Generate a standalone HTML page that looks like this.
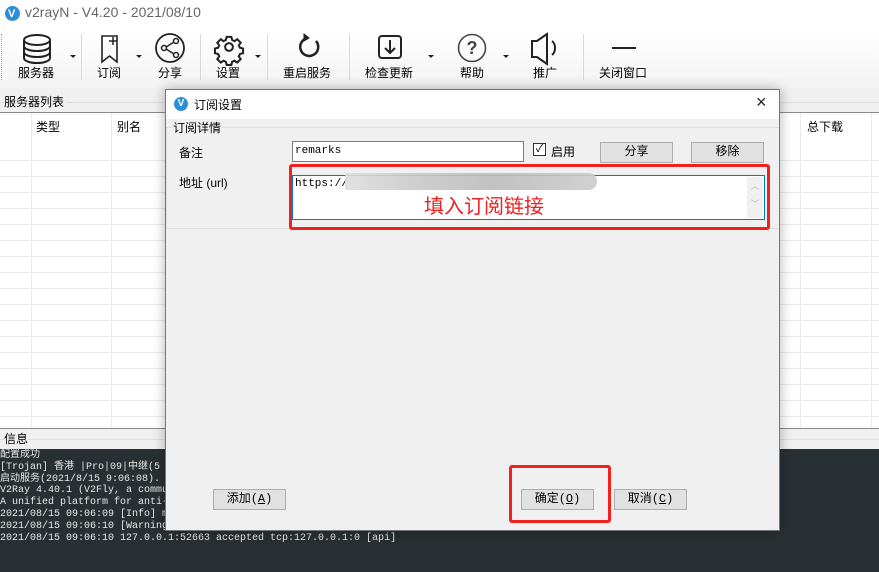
<!DOCTYPE html>
<html><head><meta charset="utf-8"><style>
*{margin:0;padding:0;box-sizing:border-box}
body{width:879px;height:572px;overflow:hidden;background:#fff;position:relative;font-family:"Liberation Sans","Microsoft YaHei","Noto Sans CJK SC",sans-serif;font-size:12px;color:#000}
.abs{position:absolute}
.tb{left:0;top:30px;width:879px;height:58px;background:linear-gradient(#fff,#f3f3f3)}
.tl{position:absolute;font-size:12px;top:64px;white-space:nowrap}
.sep{position:absolute;top:34px;width:1px;height:46px;background:#d8d8d8}
.arr{position:absolute;top:55px;width:0;height:0;border-left:3px solid transparent;border-right:3px solid transparent;border-top:3px solid #222}
.btn{position:absolute;background:#e1e1e1;border:1px solid #adadad;text-align:center;font-family:"Liberation Mono","Noto Sans CJK SC",monospace;font-size:12px;line-height:19px}
.cons{font-family:"Liberation Mono","Noto Sans CJK SC",monospace;font-size:10px;color:#e8e8e8;line-height:11.8px;white-space:pre}
</style></head><body>
<div class="abs" style="left:5px;top:6px;width:15px;height:15px;border-radius:50%;background:#2c8fd6"></div>
<div class="abs" style="left:8px;top:8px;color:#fff;font-size:11px;font-weight:bold">V</div>
<div class="abs" style="left:25px;top:4px;font-size:14px;color:#666">v2rayN - V4.20 - 2021/08/10</div>
<div class="abs tb"></div>
<div class="abs" style="left:1px;top:34px;width:1px;height:46px;border-left:1px dotted #aaa"></div>
<svg class="abs" style="left:0;top:30px" width="879" height="36" fill="none" stroke="#222" stroke-width="2">
<ellipse cx="37" cy="10" rx="13" ry="5"/><path d="M24 10v18c0 3 6 5 13 5s13-2 13-5V10M24 16c0 3 6 5 13 5s13-2 13-5M24 22c0 3 6 5 13 5s13-2 13-5"/>
<path d="M102 6h15v26l-7.5-6-7.5 6z" stroke-width="1.6"/><path d="M113 7v8M109 11h8" stroke-width="1.5"/>
<circle cx="170" cy="18" r="14" stroke-width="1.8"/><circle cx="176" cy="11" r="2.5" stroke-width="1.5"/><circle cx="164" cy="18" r="2.5" stroke-width="1.5"/><circle cx="176" cy="25" r="2.5" stroke-width="1.5"/><path d="M166 17l8-5M166 19l8 5" stroke-width="1.5"/>
<g transform="translate(229,17) scale(0.78)"><circle r="5" stroke-width="2.6"/><path d="M-3 -13h6l1 4 3 1.5 3.5-2.5 4.5 4.5-2.5 3.5 1.5 3 4 1v6l-4 1-1.5 3 2.5 3.5-4.5 4.5-3.5-2.5-3 1.5-1 4h-6l-1-4-3-1.5-3.5 2.5-4.5-4.5 2.5-3.5-1.5-3-4-1v-6l4-1 1.5-3-2.5-3.5 4.5-4.5 3.5 2.5 3-1.5z" stroke-width="2.6"/></g>
<path d="M316 11a9 9 0 1 1-8-3" stroke-width="2.5"/><path d="M304 4l5 4-5 3z" fill="#222" stroke-width="1"/>
<rect x="379" y="6" width="22" height="22" rx="3" stroke-width="2"/><path d="M390 10v13M385 18l5 5 5-5" stroke-width="2"/>
<circle cx="472" cy="18" r="13.5" stroke="#444" stroke-width="1.6"/><text x="472" y="24" font-size="18" font-weight="bold" fill="#444" stroke="none" text-anchor="middle" font-family="Liberation Sans">?</text>
<path d="M532 11h5l10-7v30l-10-7h-5z" stroke-width="2"/><path d="M552 11c4 3 4 11 0 14" stroke-width="2"/>
<path d="M612 18h24" stroke-width="2"/>
</svg>
<div class="arr" style="left:70px"></div><div class="arr" style="left:136px"></div><div class="arr" style="left:255px"></div><div class="arr" style="left:428px"></div><div class="arr" style="left:503px"></div>
<div class="sep" style="left:81px"></div><div class="sep" style="left:200px"></div><div class="sep" style="left:267px"></div><div class="sep" style="left:349px"></div><div class="sep" style="left:583px"></div>
<div class="tl" style="left:18px">服务器</div><div class="tl" style="left:97px">订阅</div><div class="tl" style="left:158px">分享</div><div class="tl" style="left:216px">设置</div><div class="tl" style="left:283px">重启服务</div><div class="tl" style="left:365px">检查更新</div><div class="tl" style="left:460px">帮助</div><div class="tl" style="left:533px">推广</div><div class="tl" style="left:599px">关闭窗口</div>
<div class="abs" style="left:0;top:88px;width:879px;height:24px;background:#f0f0f0"></div>
<div class="abs" style="left:0;top:102px;width:879px;height:1px;background:#ddd"></div>
<div class="abs" style="left:4px;top:93px;font-size:12px;background:#f0f0f0;padding-right:2px">服务器列表</div>
<div class="abs" style="left:0;top:112px;width:879px;height:1px;background:#888"></div>
<div class="abs" style="left:0;top:113px;width:879px;height:315px;background:#fff;background-image:linear-gradient(#eaeaea 1px,transparent 1px);background-size:100% 16px;background-position:0 -1px;background-clip:content-box;padding-top:39px"></div>
<div class="abs" style="left:0;top:113px;width:879px;height:27px;background:#fff"></div>
<div class="abs" style="left:31px;top:113px;width:1px;height:315px;background:#eaeaea"></div>
<div class="abs" style="left:111px;top:113px;width:1px;height:315px;background:#eaeaea"></div>
<div class="abs" style="left:800px;top:113px;width:1px;height:315px;background:#eaeaea"></div>
<div class="abs" style="left:871px;top:113px;width:1px;height:315px;background:#eaeaea"></div>
<div class="abs" style="left:36px;top:118px">类型</div><div class="abs" style="left:117px;top:118px">别名</div>
<div class="abs" style="left:807px;top:118px">总下载</div>
<div class="abs" style="left:0;top:428px;width:879px;height:21px;background:#f0f0f0;border-top:1px solid #888"></div>
<div class="abs" style="left:0;top:439px;width:879px;height:1px;background:#ddd"></div>
<div class="abs" style="left:4px;top:430px;font-size:12px;background:#f0f0f0">信息</div>
<div class="abs" style="left:0;top:449px;width:879px;height:123px;background:#293033"></div>
<div class="abs cons" style="left:0;top:450px">配置成功
[Trojan] 香港 |Pro|09|中继(5
启动服务(2021/8/15 9:06:08).
V2Ray 4.40.1 (V2Fly, a commu
A unified platform for anti-
2021/08/15 09:06:09 [Info] m
2021/08/15 09:06:10 [Warning
2021/08/15 09:06:10 127.0.0.1:52663 accepted tcp:127.0.0.1:0 [api]</div>
<div class="abs" style="left:165px;top:89px;width:615px;height:442px;background:#f0f0f0;border:1px solid #777;box-shadow:0 0 12px rgba(0,0,0,.3)"></div>
<div class="abs" style="left:166px;top:90px;width:613px;height:29px;background:#fff"></div>
<div class="abs" style="left:174px;top:97px;width:14px;height:14px;border-radius:50%;background:#2c8fd6;color:#fff;font-size:10px;font-weight:bold;text-align:center;line-height:14px">V</div>
<div class="abs" style="left:194px;top:96px;font-size:12px">订阅设置</div>
<div class="abs" style="left:756px;top:92px;font-size:18px;color:#222">×</div>
<div class="abs" style="left:166px;top:127px;width:613px;height:102px;border-top:1px solid #ddd;border-bottom:1px solid #ddd;border-left:1px solid #ddd"></div>
<div class="abs" style="left:172px;top:119px;background:#f0f0f0;padding:0 1px">订阅详情</div>
<div class="abs" style="left:179px;top:144px">备注</div>
<div class="abs" style="left:179px;top:174px">地址 (url)</div>
<div class="abs" style="left:292px;top:141px;width:232px;height:21px;background:#fff;border:1px solid #7a7a7a;font-family:'Liberation Mono',monospace;font-size:11px;padding:3px 2px">remarks</div>
<div class="abs" style="left:533px;top:143px;width:13px;height:13px;border:1px solid #333;background:#fff;font-size:11px;line-height:11px;text-align:center">✓</div>
<div class="abs" style="left:551px;top:143px">启用</div>
<div class="btn" style="left:600px;top:142px;width:73px;height:21px">分享</div>
<div class="btn" style="left:691px;top:142px;width:73px;height:21px">移除</div>
<div class="abs" style="left:292px;top:175px;width:473px;height:45px;background:#fff;border:1px solid #0078d7"></div>
<div class="abs" style="left:747px;top:177px;width:16px;height:41px;background:#f0f0f0;color:#bbb;font-size:9px;text-align:center;line-height:18px">︿<br>﹀</div>
<div class="abs" style="left:295px;top:178px;font-family:'Liberation Mono',monospace;font-size:11px">https://</div>
<div class="abs" style="left:345px;top:173px;width:252px;height:17px;background:linear-gradient(90deg,#ddd,#c8c8c8 30%,#bbb 60%,#ccc);border-radius:0 8px 8px 0;opacity:.9"></div>
<div class="abs" style="left:424px;top:190px;font-size:20px;color:#f02020">填入订阅链接</div>
<div class="abs" style="left:289px;top:164px;width:481px;height:66px;border:3px solid #f32020;border-radius:3px"></div>
<div class="btn" style="left:213px;top:489px;width:73px;height:21px">添加(<u>A</u>)</div>
<div class="btn" style="left:521px;top:489px;width:73px;height:21px">确定(<u>O</u>)</div>
<div class="btn" style="left:614px;top:489px;width:73px;height:21px">取消(<u>C</u>)</div>
<div class="abs" style="left:509px;top:465px;width:102px;height:58px;border:3px solid #f32020;border-radius:3px"></div>
</body></html>
